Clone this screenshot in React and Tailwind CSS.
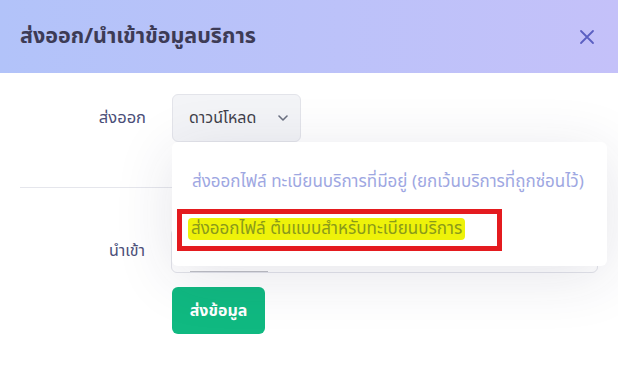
import React from "react";

export default function App() {
  const font = { fontFamily: '"Noto Sans Thai", "Noto Sans", "DejaVu Sans", sans-serif' };
  return (
    <div className="w-[618px] h-[373px] bg-white overflow-hidden relative" style={font}>
      <div className="h-[73px] px-5 flex items-center justify-between bg-gradient-to-r from-[#b2c3f9] to-[#c4c1f9]">
        <h1 className="text-[21.5px] font-bold text-[#3d3b55] leading-none">ส่งออก/นำเข้าข้อมูลบริการ</h1>
        <svg width="16" height="16" viewBox="0 0 16 16" className="mr-[3px]" fill="none" stroke="#5b5fc2" strokeWidth="1.8" strokeLinecap="round">
          <path d="M2 2 L14 14 M14 2 L2 14" />
        </svg>
      </div>
      <div className="px-5 pt-[21px]">
        <div className="flex items-center">
          <div className="w-[126px] text-right text-[16.5px] text-[#4a4e78]">ส่งออก</div>
          <div className="ml-[26px] relative">
            <div className="h-[48px] w-[129px] rounded-md border border-[#e3e4ea] bg-[#f3f4f7] flex items-center pl-[16px] gap-[22px] text-[16px] text-[#3f3f4a]">
              <span>ดาวน์โหลด</span>
              <svg width="10" height="6" viewBox="0 0 10 6" fill="none" stroke="#6b7080" strokeWidth="1.6" strokeLinecap="round" strokeLinejoin="round">
                <path d="M1 1 L5 5 L9 1" />
              </svg>
            </div>
          </div>
        </div>
        <div className="mt-[45px] h-px bg-[#e5e6ec]" />
        <div className="flex items-center mt-[40px]">
          <div className="w-[126px] text-right text-[16px] text-[#4a4e78]">นำเข้า</div>
          <div className="ml-[26px] w-[430px] h-[45px] rounded-md border border-[#e3e4ea] bg-white pl-[18px] flex items-end">
            <div className="w-[78px] h-[20px] border-b border-[#bfc0c6]" />
          </div>
        </div>
        <div className="ml-[152px] mt-[14px]">
          <button className="h-[47px] w-[93px] rounded-md bg-[#10b981] text-white font-bold text-[16px]">ส่งข้อมูล</button>
        </div>
      </div>

      <div className="absolute left-[172px] top-[142px] w-[435px] bg-white rounded-md shadow-[0_10px_60px_rgba(40,40,80,0.12)] pt-[18px] pb-[14px]">
        <div className="h-[46px] flex items-center pl-[20px] text-[17px] text-[#9ea7e2] whitespace-nowrap">
          ส่งออกไฟล์ ทะเบียนบริการที่มีอยู่ (ยกเว้นบริการที่ถูกซ่อนไว้)
        </div>
        <div className="h-[46px] flex items-center pl-[16px] text-[17px] whitespace-nowrap">
          <span className="bg-[#eef20a] text-[#8a9a1a] px-[3px] rounded-sm leading-[22px]">ส่งออกไฟล์ ต้นแบบสำหรับทะเบียนบริการ</span>
        </div>
      </div>
      <div className="absolute left-[177px] top-[209px] w-[325px] h-[42px] border-[5px] border-[#e41b1f]" />
    </div>
  );
}
